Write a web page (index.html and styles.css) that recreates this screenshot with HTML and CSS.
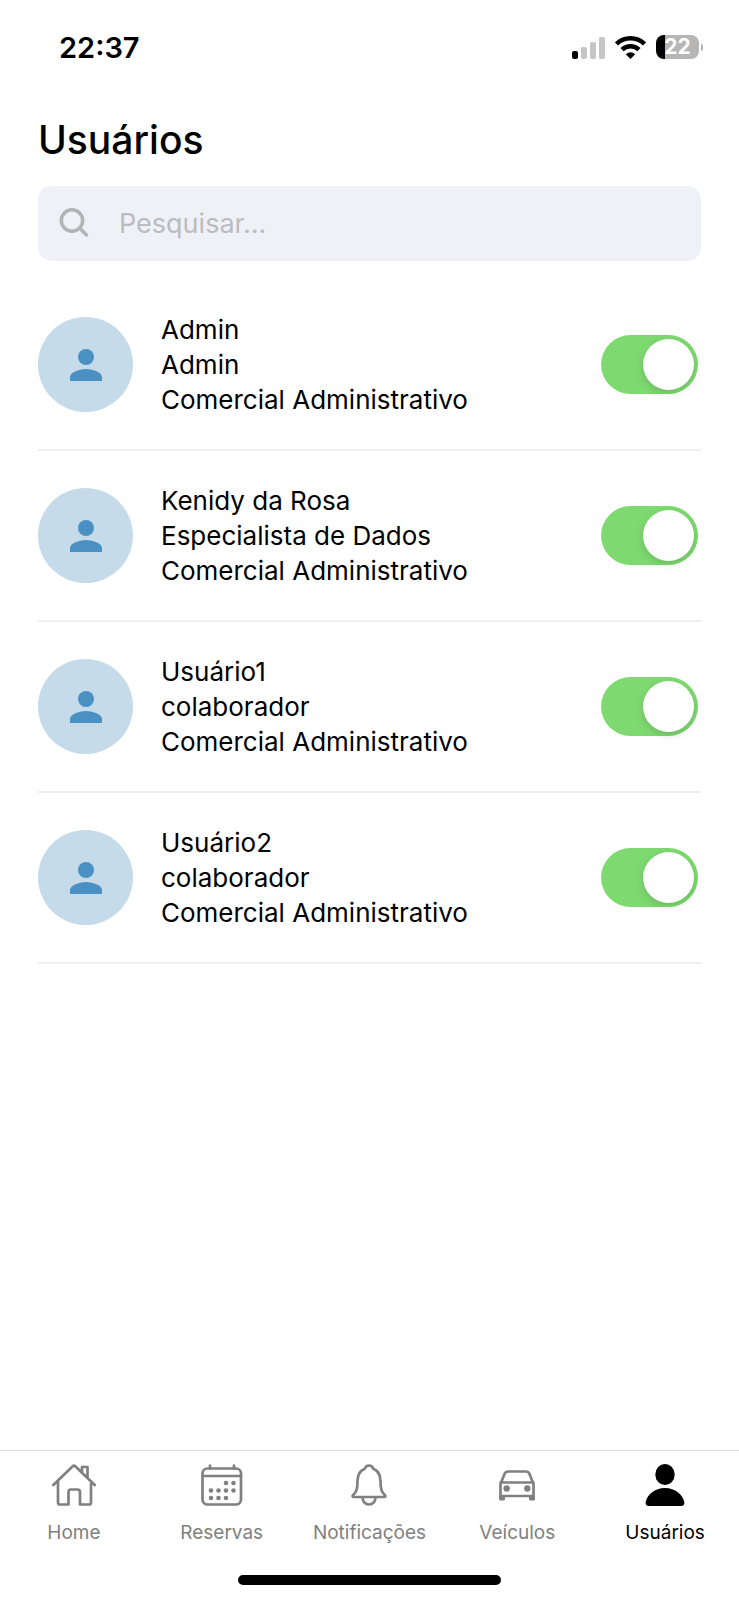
FILE: index.html
```html
<!DOCTYPE html>
<html lang="pt-BR">
<head>
<meta charset="utf-8">
<meta name="viewport" content="width=device-width, initial-scale=1">
<title>Usuários</title>
<link rel="stylesheet" href="styles.css">
</head>
<body>
<svg class="symbols" aria-hidden="true">
  <symbol id="person" viewBox="0 0 32 32">
    <circle cx="16" cy="8" r="8"/>
    <path d="M0 32v-4c0-5.300 10.700-8 16-8s16 2.700 16 8v4z"/>
  </symbol>
</svg>

<header class="status">
  <time class="clock">22:37</time>
  <div class="indicators">
    <svg class="signal" viewBox="0 0 33 23" aria-hidden="true">
      <rect x="0" y="15" width="6" height="8" rx="2"/>
      <rect class="dim" x="9" y="11" width="6" height="12" rx="2"/>
      <rect class="dim" x="18" y="6" width="6" height="17" rx="2"/>
      <rect class="dim" x="27" y="1" width="6" height="22" rx="2"/>
    </svg>
    <svg class="wifi" viewBox="0 0 31 23" aria-hidden="true">
      <path class="arc" d="M1.500 8A20 20 0 0 1 29.500 8M7 13.700a12.500 12.500 0 0 1 17 0"/>
      <path d="M15.500 23 10.800 18.300q4.700-4 9.400 0z"/>
    </svg>
    <div class="battery"><span class="level">22</span></div>
  </div>
</header>

<main class="content">
  <h1 class="title">Usuários</h1>
  <label class="search">
    <svg class="search-icon" viewBox="0 0 30 30" aria-hidden="true">
      <circle cx="13" cy="11.500" r="10.700"/>
      <path d="m20.500 19 7 7"/>
    </svg>
    <input class="search-input" type="search" placeholder="Pesquisar..." aria-label="Pesquisar">
  </label>

  <ul class="users">
    <li class="user">
      <span class="avatar"><svg class="avatar-icon" aria-hidden="true"><use href="#person"/></svg></span>
      <label class="details" for="user-1"><span>Admin</span><span>Admin</span><span>Comercial Administrativo</span></label>
      <input class="switch" id="user-1" type="checkbox" role="switch" checked>
    </li>
    <li class="user">
      <span class="avatar"><svg class="avatar-icon" aria-hidden="true"><use href="#person"/></svg></span>
      <label class="details" for="user-2"><span>Kenidy da Rosa</span><span>Especialista de Dados</span><span>Comercial Administrativo</span></label>
      <input class="switch" id="user-2" type="checkbox" role="switch" checked>
    </li>
    <li class="user">
      <span class="avatar"><svg class="avatar-icon" aria-hidden="true"><use href="#person"/></svg></span>
      <label class="details" for="user-3"><span>Usuário1</span><span>colaborador</span><span>Comercial Administrativo</span></label>
      <input class="switch" id="user-3" type="checkbox" role="switch" checked>
    </li>
    <li class="user">
      <span class="avatar"><svg class="avatar-icon" aria-hidden="true"><use href="#person"/></svg></span>
      <label class="details" for="user-4"><span>Usuário2</span><span>colaborador</span><span>Comercial Administrativo</span></label>
      <input class="switch" id="user-4" type="checkbox" role="switch" checked>
    </li>
  </ul>
</main>

<footer class="footer">
  <nav class="tabs">
    <a class="tab" href="#home">
      <svg class="tab-icon" viewBox="0 0 44 44" aria-hidden="true">
        <path d="M1.300 22 20.500 3.500q1.500-1.500 3 0L42.700 22M6 18v21.500q0 2 2 2h8.500V29q0-2.500 2.500-2.500h6.500q2.500 0 2.500 2.500v12.500H37q2 0 2-2V18M30 9V4h5.500v11"/>
      </svg>
      Home
    </a>
    <a class="tab" href="#reservas">
      <svg class="tab-icon" viewBox="0 0 44 44" aria-hidden="true">
        <rect x="2.500" y="5.500" width="38.500" height="36" rx="5"/>
        <path d="M2.500 13H41M10 2.500v3M34 2.500v3"/>
        <g class="solid">
          <circle cx="26" cy="20" r="2.300"/><circle cx="33.500" cy="20" r="2.300"/>
          <circle cx="11" cy="27.500" r="2.300"/><circle cx="18.500" cy="27.500" r="2.300"/><circle cx="26" cy="27.500" r="2.300"/><circle cx="33.500" cy="27.500" r="2.300"/>
          <circle cx="11" cy="35" r="2.300"/><circle cx="18.500" cy="35" r="2.300"/><circle cx="26" cy="35" r="2.300"/>
        </g>
      </svg>
      Reservas
    </a>
    <a class="tab" href="#notificacoes">
      <svg class="tab-icon" viewBox="0 0 44 44" aria-hidden="true">
        <path d="M18 5.500c.5-2 2-3 4-3s3.500 1 4 3c5.500 2.500 7.500 6.500 7.500 12.500 0 8 1 11 4.300 14 1.200 1.200.7 2-.8 2h-30c-1.500 0-2-.8-.8-2C9.500 29 10.500 26 10.500 18c0-6 2-10 7.500-12.500z"/>
        <path d="M15.500 34.500c0 4 2.800 7 6.500 7s6.500-3 6.500-7"/>
      </svg>
      Notificações
    </a>
    <a class="tab" href="#veiculos">
      <svg class="tab-icon" viewBox="0 0 44 44" aria-hidden="true">
        <path d="M5.500 35V21l4-10q1-2.500 3.500-2.500h18q2.500 0 3.500 2.500l4 10v14M5.500 19.500h33M5.500 33h33"/>
        <path class="solid" d="M4 33h6v3q0 1.500-1.500 1.500h-3Q4 37.500 4 36zM34 33h6v3q0 1.500-1.500 1.500h-3Q34 37.500 34 36z"/>
        <circle class="solid" cx="11.700" cy="25.500" r="3.200"/>
        <circle class="solid" cx="32.300" cy="25.500" r="3.200"/>
      </svg>
      Veículos
    </a>
    <a class="tab active" href="#usuarios" aria-current="page">
      <svg class="tab-icon" viewBox="0 0 44 44" aria-hidden="true">
        <g class="solid">
          <ellipse cx="22" cy="11.500" rx="9.700" ry="10.500"/>
          <path d="M22 25c10.500 0 17.500 6.500 19.200 13.500.7 2.800-.3 4.500-3.200 4.500H6c-2.900 0-3.900-1.700-3.200-4.500C4.500 31.500 11.500 25 22 25z"/>
        </g>
      </svg>
      Usuários
    </a>
  </nav>
  <div class="home-bar"></div>
</footer>
</body>
</html>
```
FILE: styles.css
```css
* { box-sizing: border-box; }

body {
  margin: 0;
  min-height: 100vh;
  display: flex;
  flex-direction: column;
  background: #fff;
  color: #000;
  font-family: Inter, "Liberation Sans", sans-serif;
}

.symbols { display: none; }

.status {
  display: flex;
  justify-content: space-between;
  align-items: center;
  height: 94px;
  padding: 0 36px 0 59px;
}

.clock { font-size: 29px; font-weight: 600; }

.indicators { display: flex; align-items: center; gap: 10px; }
.signal { width: 33px; height: 23px; }
.dim { fill: #c6c6c6; }
.wifi { width: 31px; height: 23px; }
.arc { fill: none; stroke: #000; stroke-width: 4.5; }

.battery { display: flex; align-items: center; gap: 2px; }
.battery::after {
  content: "";
  width: 2px;
  height: 7px;
  border-radius: 0 2px 2px 0;
  background: #b3b3b3;
}
.level {
  width: 43px;
  border-radius: 8px;
  background: linear-gradient(to right, #000 22%, #b6b6b6 22%);
  color: #fff;
  font-size: 21px;
  font-weight: 700;
  line-height: 24px;
  text-align: center;
}

.content { flex: 1; padding: 22px 38px 0; }

.title {
  margin: 0 0 22px;
  font-size: 39px;
  font-weight: 500;
  line-height: 48px;
}

.search {
  display: flex;
  align-items: center;
  gap: 30px;
  height: 75px;
  padding: 0 21px;
  border-radius: 14px;
  background: #eff1f6;
}
.search-icon {
  flex: none;
  width: 30px;
  height: 30px;
  overflow: visible;
  fill: none;
  stroke: #b3b4b6;
  stroke-width: 3.5;
  stroke-linecap: round;
}
.search-input {
  flex: 1;
  min-width: 0;
  padding: 0;
  border: 0;
  outline: 0;
  background: none;
  font: inherit;
  font-size: 27px;
}
.search-input::placeholder { color: #bbbcc0; }

.users { margin: 19px 0 0; padding: 0; list-style: none; }

.user {
  display: flex;
  align-items: center;
  gap: 28px;
  padding: 37px 3px 37px 0;
  border-bottom: 2px solid #efefef;
}

.avatar {
  flex: none;
  display: grid;
  place-items: center;
  width: 95px;
  height: 95px;
  border-radius: 50%;
  background: #c6dbea;
}
.avatar-icon { width: 32px; height: 32px; fill: #4a90c2; }

.details {
  flex: 1;
  display: flex;
  flex-direction: column;
  margin: -5px 0;
  font-size: 26px;
  line-height: 35px;
}

.switch {
  appearance: none;
  flex: none;
  display: flex;
  align-items: center;
  width: 97px;
  height: 59px;
  margin: 0;
  padding: 0 4px;
  border-radius: 30px;
  background: #d9d9de;
}
.switch::before {
  content: "";
  width: 51px;
  height: 51px;
  border-radius: 50%;
  background: #fff;
  box-shadow: 0 3px 8px rgb(0 0 0 / 15%);
}
.switch:checked { justify-content: flex-end; background: #7eda70; }

.footer { border-top: 1px solid #e0e0e0; }

.tabs { display: grid; grid-template-columns: repeat(5, 1fr); }

.tab {
  display: flex;
  flex-direction: column;
  align-items: center;
  gap: 14px;
  padding-top: 12px;
  color: #808080;
  font-size: 19px;
  line-height: 24px;
  text-decoration: none;
}
.tab.active { color: #000; }
.tab-icon {
  width: 44px;
  height: 44px;
  fill: none;
  stroke: currentColor;
  stroke-width: 2.7;
  stroke-linecap: round;
  stroke-linejoin: round;
}
.solid { fill: currentColor; stroke: none; }

.home-bar {
  width: 263px;
  height: 10px;
  margin: 30px auto 15px;
  border-radius: 5px;
  background: #000;
}
```
